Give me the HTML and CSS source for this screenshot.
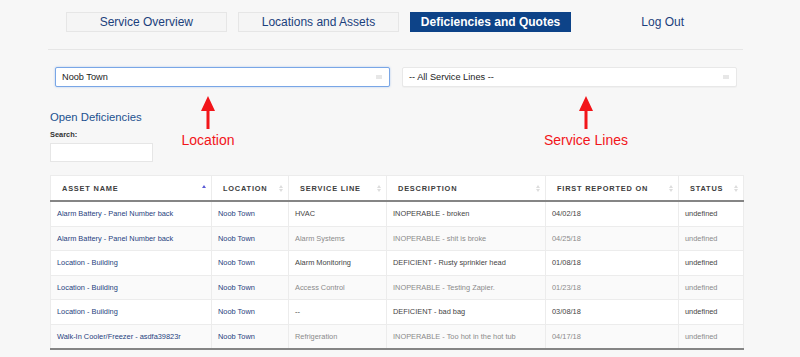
FILE: index.html
```html
<!DOCTYPE html>
<html lang="en">
<head>
    <meta charset="UTF-8">
    <meta name="viewport" content="width=device-width, initial-scale=1.0">
    <title>Deficiencies and Quotes</title>
    <link rel="stylesheet" href="styles.css">
</head>
<body>
    <div class="page">
        <nav class="tabs">
            <a class="tab" href="#">Service Overview</a>
            <a class="tab" href="#">Locations and Assets</a>
            <a class="tab tab-active" href="#">Deficiencies and Quotes</a>
            <a class="tab tab-plain" href="#">Log Out</a>
        </nav>
        <hr class="divider">

        <div class="filters">
            <div class="select select-focus">
                <span>Noob Town</span>
                <svg class="select-icon" width="6" height="4" viewBox="0 0 6 4"><path d="M0 1h6M0 3h6" stroke="#cfcfcf" stroke-width="1"/></svg>
            </div>
            <div class="select">
                <span>-- All Service Lines --</span>
                <svg class="select-icon" width="6" height="4" viewBox="0 0 6 4"><path d="M0 1h6M0 3h6" stroke="#cfcfcf" stroke-width="1"/></svg>
            </div>
        </div>

        <h2 class="section-title">Open Deficiencies</h2>
        <label class="search-label" for="search">Search:</label>
        <input class="search-input" id="search" type="text">

        <table class="grid">
            <colgroup>
                <col class="col-asset">
                <col class="col-location">
                <col class="col-line">
                <col class="col-desc">
                <col class="col-date">
                <col class="col-status">
            </colgroup>
            <thead>
                <tr>
                    <th><div class="th-inner">Asset Name<span class="sort sort-asc"></span></div></th>
                    <th><div class="th-inner">Location<span class="sort"></span></div></th>
                    <th><div class="th-inner">Service Line<span class="sort"></span></div></th>
                    <th><div class="th-inner">Description<span class="sort"></span></div></th>
                    <th><div class="th-inner">First Reported On<span class="sort"></span></div></th>
                    <th><div class="th-inner">Status<span class="sort"></span></div></th>
                </tr>
            </thead>
            <tbody>
                <tr>
                    <td class="link">Alarm Battery - Panel Number back</td>
                    <td class="link">Noob Town</td>
                    <td>HVAC</td>
                    <td>INOPERABLE - broken</td>
                    <td>04/02/18</td>
                    <td>undefined</td>
                </tr>
                <tr>
                    <td class="link">Alarm Battery - Panel Number back</td>
                    <td class="link">Noob Town</td>
                    <td>Alarm Systems</td>
                    <td>INOPERABLE - shit is broke</td>
                    <td>04/25/18</td>
                    <td>undefined</td>
                </tr>
                <tr>
                    <td class="link">Location - Building</td>
                    <td class="link">Noob Town</td>
                    <td>Alarm Monitoring</td>
                    <td>DEFICIENT - Rusty sprinkler head</td>
                    <td>01/08/18</td>
                    <td>undefined</td>
                </tr>
                <tr>
                    <td class="link">Location - Building</td>
                    <td class="link">Noob Town</td>
                    <td>Access Control</td>
                    <td>INOPERABLE - Testing Zapier.</td>
                    <td>01/23/18</td>
                    <td>undefined</td>
                </tr>
                <tr>
                    <td class="link">Location - Building</td>
                    <td class="link">Noob Town</td>
                    <td>--</td>
                    <td>DEFICIENT - bad bag</td>
                    <td>03/08/18</td>
                    <td>undefined</td>
                </tr>
                <tr>
                    <td class="link">Walk-In Cooler/Freezer - asdfa39823r</td>
                    <td class="link">Noob Town</td>
                    <td>Refrigeration</td>
                    <td>INOPERABLE - Too hot in the hot tub</td>
                    <td>04/17/18</td>
                    <td>undefined</td>
                </tr>
            </tbody>
        </table>

        <!-- annotations drawn over the screenshot -->
        <div class="callout callout-location">
            <svg class="callout-arrow" width="14" height="33" viewBox="0 0 14 33"><path d="M7 0L0 15H5.5V33H8.5V15H14Z" fill="#f2151a"/></svg>
            <span class="callout-label">Location</span>
        </div>
        <div class="callout callout-lines">
            <svg class="callout-arrow" width="14" height="33" viewBox="0 0 14 33"><path d="M7 0L0 15H5.5V33H8.5V15H14Z" fill="#f2151a"/></svg>
            <span class="callout-label">Service Lines</span>
        </div>
    </div>
</body>
</html>
```

FILE: styles.css
```css
body {
    margin: 0;
    background-color: #f7f7f7;
    font-family: "Liberation Sans", Arial, sans-serif;
    color: #333333;
}
.page {
    position: relative;
    width: 693px;
    margin-left: 50px;
}
.tabs {
    display: flex;
    gap: 11.5px;
    padding: 12px 0 0 16px;
}
.tab {
    box-sizing: border-box;
    width: 161px;
    height: 20px;
    line-height: 18px;
    text-align: center;
    font-size: 12px;
    color: #1b3f7c;
    text-decoration: none;
    background-color: #f5f5f5;
    border: 1px solid #e6e6e6;
}
.tab-active {
    background-color: #0d4388;
    border-color: #0d4388;
    color: #FFFFFF;
    font-weight: bold;
}
.tab-plain {
    background: none;
    border-color: transparent;
}
.divider {
    margin: 17px 0 0 -2px;
    width: 695px;
    height: 0;
    border: none;
    border-top: 1px solid #e6e6e6;
}
.filters {
    display: flex;
    gap: 12px;
    margin-top: 17px;
    padding-left: 5px;
}
.select {
    box-sizing: border-box;
    width: 335px;
    height: 20px;
    display: flex;
    align-items: center;
    justify-content: space-between;
    padding: 0 7px 0 6px;
    background-color: #FFFFFF;
    border: 1px solid #e8e8e8;
    border-radius: 2px;
    font-size: 9.2px;
    color: #222222;
    box-shadow: 0 1px 1px rgba(0, 0, 0, 0.03);
}
.select-focus {
    border-color: #79a6e6;
    box-shadow: 0 0 2px rgba(90, 145, 230, 0.5);
}
.section-title {
    margin: 23px 0 0 0;
    font-size: 11.3px;
    line-height: 14px;
    font-weight: normal;
    color: #22518f;
}
.search-label {
    display: block;
    margin-top: 6px;
    font-size: 7.4px;
    line-height: 10px;
    font-weight: bold;
    color: #333333;
}
.search-input {
    display: block;
    box-sizing: border-box;
    width: 103px;
    height: 19px;
    margin-top: 3px;
    border: 1px solid #e6e6e6;
    background-color: #FFFFFF;
}
.grid {
    width: 693px;
    margin-top: 13px;
    border-collapse: collapse;
    table-layout: fixed;
    background-color: #FFFFFF;
    font-size: 7.4px;
}
.col-asset { width: 161px; }
.col-location { width: 77px; }
.col-line { width: 98px; }
.col-desc { width: 159px; }
.col-date { width: 133px; }
.col-status { width: 65px; }
.grid th {
    height: 24px;
    padding: 0 5px 0 11px;
    text-align: left;
    text-transform: uppercase;
    letter-spacing: 0.8px;
    font-weight: bold;
    color: #3d3d3d;
    border: 1px solid #ececec;
    border-bottom: 2px solid #858585;
}
.th-inner {
    display: flex;
    align-items: center;
    justify-content: space-between;
    white-space: nowrap;
}
.sort {
    display: flex;
    flex-direction: column;
    gap: 1px;
}
.sort::before, .sort::after {
    content: "";
    border-left: 2px solid transparent;
    border-right: 2px solid transparent;
}
.sort::before {
    border-bottom: 3px solid #dddddd;
}
.sort::after {
    border-top: 3px solid #dddddd;
}
.sort-asc::before {
    border-bottom-color: #5b5bd6;
}
.sort-asc::after {
    border-top-color: transparent;
}
.grid td {
    height: 23.5px;
    padding: 0 6px;
    color: #444444;
    border-left: 1px solid #ececec;
    border-right: 1px solid #ececec;
    border-top: 1px solid #ececec;
    white-space: nowrap;
    overflow: hidden;
}
.grid tbody tr:nth-child(even) {
    background-color: #fafafa;
}
.grid tbody tr:nth-child(even) td {
    color: #8a8a8a;
}
.grid tbody tr:last-child td {
    border-bottom: 2px solid #858585;
}
.grid td.link,
.grid tbody tr:nth-child(even) td.link {
    color: #1f3f7e;
}
.callout {
    position: absolute;
    top: 96px;
    width: 120px;
    display: flex;
    flex-direction: column;
    align-items: center;
}
.callout-location {
    left: 98px;
}
.callout-lines {
    left: 476px;
}
.callout-label {
    margin-top: 3px;
    font-size: 14px;
    line-height: 16px;
    color: #f2151a;
}
```
